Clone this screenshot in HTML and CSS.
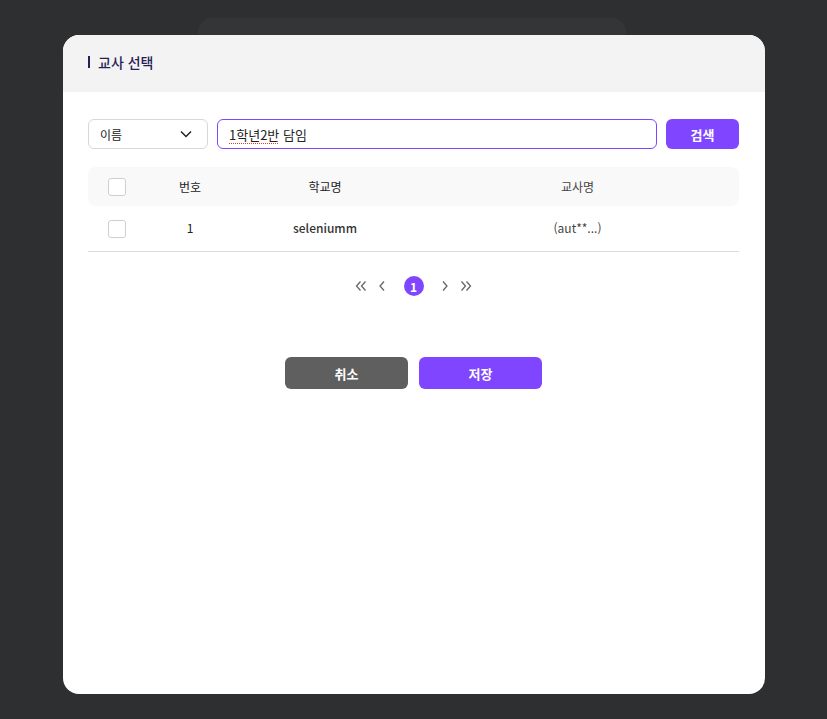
FILE: index.html
```html
<!DOCTYPE html>
<html lang="ko">
<head>
    <meta charset="UTF-8">
    <meta name="viewport" content="width=device-width, initial-scale=1.0">
    <title>교사 선택</title>
    <link rel="stylesheet" href="styles.css">
</head>
<body>
<div class="backdrop">
    <div class="back_card"></div>
    <div class="modal">
        <div class="modal_header">
            <h2 class="modal_title">교사 선택</h2>
        </div>
        <div class="modal_body">
            <div class="search_row">
                <div class="select_box">
                    <span>이름</span>
                    <svg width="14" height="14" viewBox="0 0 14 14"><path d="M2 4.5 L7 9.5 L12 4.5" fill="none" stroke="#222" stroke-width="1.5"/></svg>
                </div>
                <div class="search_input"><span class="typed">1학년2반</span> 담임</div>
                <button class="btn btn_primary search_btn">검색</button>
            </div>

            <div class="table">
                <div class="tr thead">
                    <div class="td col_check"><span class="checkbox"></span></div>
                    <div class="td col_no">번호</div>
                    <div class="td col_school">학교명</div>
                    <div class="td col_teacher">교사명</div>
                </div>
                <div class="tr tbody_row">
                    <div class="td col_check"><span class="checkbox"></span></div>
                    <div class="td col_no">1</div>
                    <div class="td col_school school_name">seleniumm</div>
                    <div class="td col_teacher">(aut**...)</div>
                </div>
            </div>

            <div class="pagination">
                <span class="page_arrow">
                    <svg width="12" height="12" viewBox="0 0 12 12"><path d="M5.5 1.5 L1.5 6 L5.5 10.5 M10.5 1.5 L6.5 6 L10.5 10.5" fill="none" stroke="#666" stroke-width="1.3"/></svg>
                </span>
                <span class="page_arrow">
                    <svg width="12" height="12" viewBox="0 0 12 12"><path d="M8 1.5 L4 6 L8 10.5" fill="none" stroke="#666" stroke-width="1.3"/></svg>
                </span>
                <span class="page_num active">1</span>
                <span class="page_arrow">
                    <svg width="12" height="12" viewBox="0 0 12 12"><path d="M4 1.5 L8 6 L4 10.5" fill="none" stroke="#666" stroke-width="1.3"/></svg>
                </span>
                <span class="page_arrow">
                    <svg width="12" height="12" viewBox="0 0 12 12"><path d="M1.5 1.5 L5.5 6 L1.5 10.5 M6.5 1.5 L10.5 6 L6.5 10.5" fill="none" stroke="#666" stroke-width="1.3"/></svg>
                </span>
            </div>

            <div class="actions">
                <button class="btn btn_gray">취소</button>
                <button class="btn btn_primary">저장</button>
            </div>
        </div>
    </div>
</div>
</body>
</html>
```

FILE: styles.css
```css
* {
    box-sizing: border-box;
}
body, html {
    margin: 0;
    padding: 0;
    width: 100%;
    height: 100%;
    background-color: #2e2f31;
    font-family: "Noto Sans CJK KR", "Noto Sans", sans-serif;
    color: #222;
}
.backdrop {
    position: relative;
    height: 100%;
    padding: 35px 62px 25px 63px;
}
/* second modal sitting behind the active one */
.back_card {
    position: absolute;
    top: 18px;
    left: 198px;
    width: 428px;
    height: 40px;
    background-color: #343536;
    border-radius: 14px;
}
.modal {
    position: relative;
    height: 659px;
    background-color: #fff;
    border-radius: 16px;
    overflow: hidden;
}
.modal_header {
    height: 57px;
    background-color: #f3f3f3;
    display: flex;
    align-items: center;
    padding-left: 25px;
    padding-bottom: 3px;
}
.modal_title {
    margin: 0;
    font-size: 14px;
    font-weight: 500;
    color: #2b1e57;
    display: flex;
    align-items: center;
    gap: 8px;
}
.modal_title::before {
    content: "";
    width: 2px;
    height: 12px;
    background-color: #2b1e57;
}
.modal_body {
    padding: 27px 26px 0 25px;
}
.search_row {
    display: flex;
    gap: 9px;
    height: 30px;
}
.select_box {
    width: 120px;
    border: 1px solid #d7d7d7;
    border-radius: 6px;
    display: flex;
    align-items: center;
    justify-content: space-between;
    padding: 0 14px 0 11px;
    font-size: 12px;
}
.search_input {
    flex: 1;
    border: 1px solid #8046ff;
    border-radius: 6px;
    display: flex;
    align-items: center;
    padding: 0 11px;
    font-size: 13px;
    white-space: pre;
}
.typed {
    text-decoration: underline dotted #e53935;
    text-decoration-thickness: 1px;
    text-underline-offset: 3px;
}
.btn {
    border: none;
    border-radius: 6px;
    color: #fff;
    font-family: inherit;
    font-size: 13px;
    font-weight: 700;
    cursor: pointer;
}
.btn_primary {
    background-color: #8046ff;
}
.btn_gray {
    background-color: #5f5f5f;
}
.search_btn {
    width: 73px;
}
.table {
    margin-top: 18px;
    font-size: 12px;
}
.tr {
    display: grid;
    grid-template-columns: 58px 88px 182px 1fr;
    align-items: center;
}
.thead {
    height: 39px;
    background-color: #f9f9f9;
    border-radius: 8px;
}
.tbody_row {
    height: 46px;
    padding-bottom: 3px;
    border-bottom: 1px solid #dcdcdc;
}
.td {
    text-align: center;
}
.col_teacher {
    color: #444;
}
.school_name {
    font-weight: 500;
    color: #333;
}
.col_check {
    display: flex;
    justify-content: center;
}
.tbody_row .col_check {
    margin-top: 3px;
}
.checkbox {
    width: 18px;
    height: 18px;
    border: 1px solid #cfcfcf;
    border-radius: 3px;
    background-color: #fff;
}
.pagination {
    margin-top: 24px;
    display: flex;
    justify-content: center;
    align-items: center;
    padding-left: 0;
}
.page_arrow {
    width: 21px;
    height: 20px;
    display: flex;
    align-items: center;
    justify-content: center;
}
.page_num {
    width: 20px;
    height: 20px;
    margin: 0 11px;
    border-radius: 50%;
    display: flex;
    align-items: center;
    justify-content: center;
    font-size: 12px;
    font-weight: 700;
}
.page_num.active {
    background-color: #8046ff;
    color: #fff;
}
.actions {
    margin-top: 61px;
    display: flex;
    justify-content: center;
    gap: 11px;
}
.actions .btn {
    width: 123px;
    height: 32px;
}
```
